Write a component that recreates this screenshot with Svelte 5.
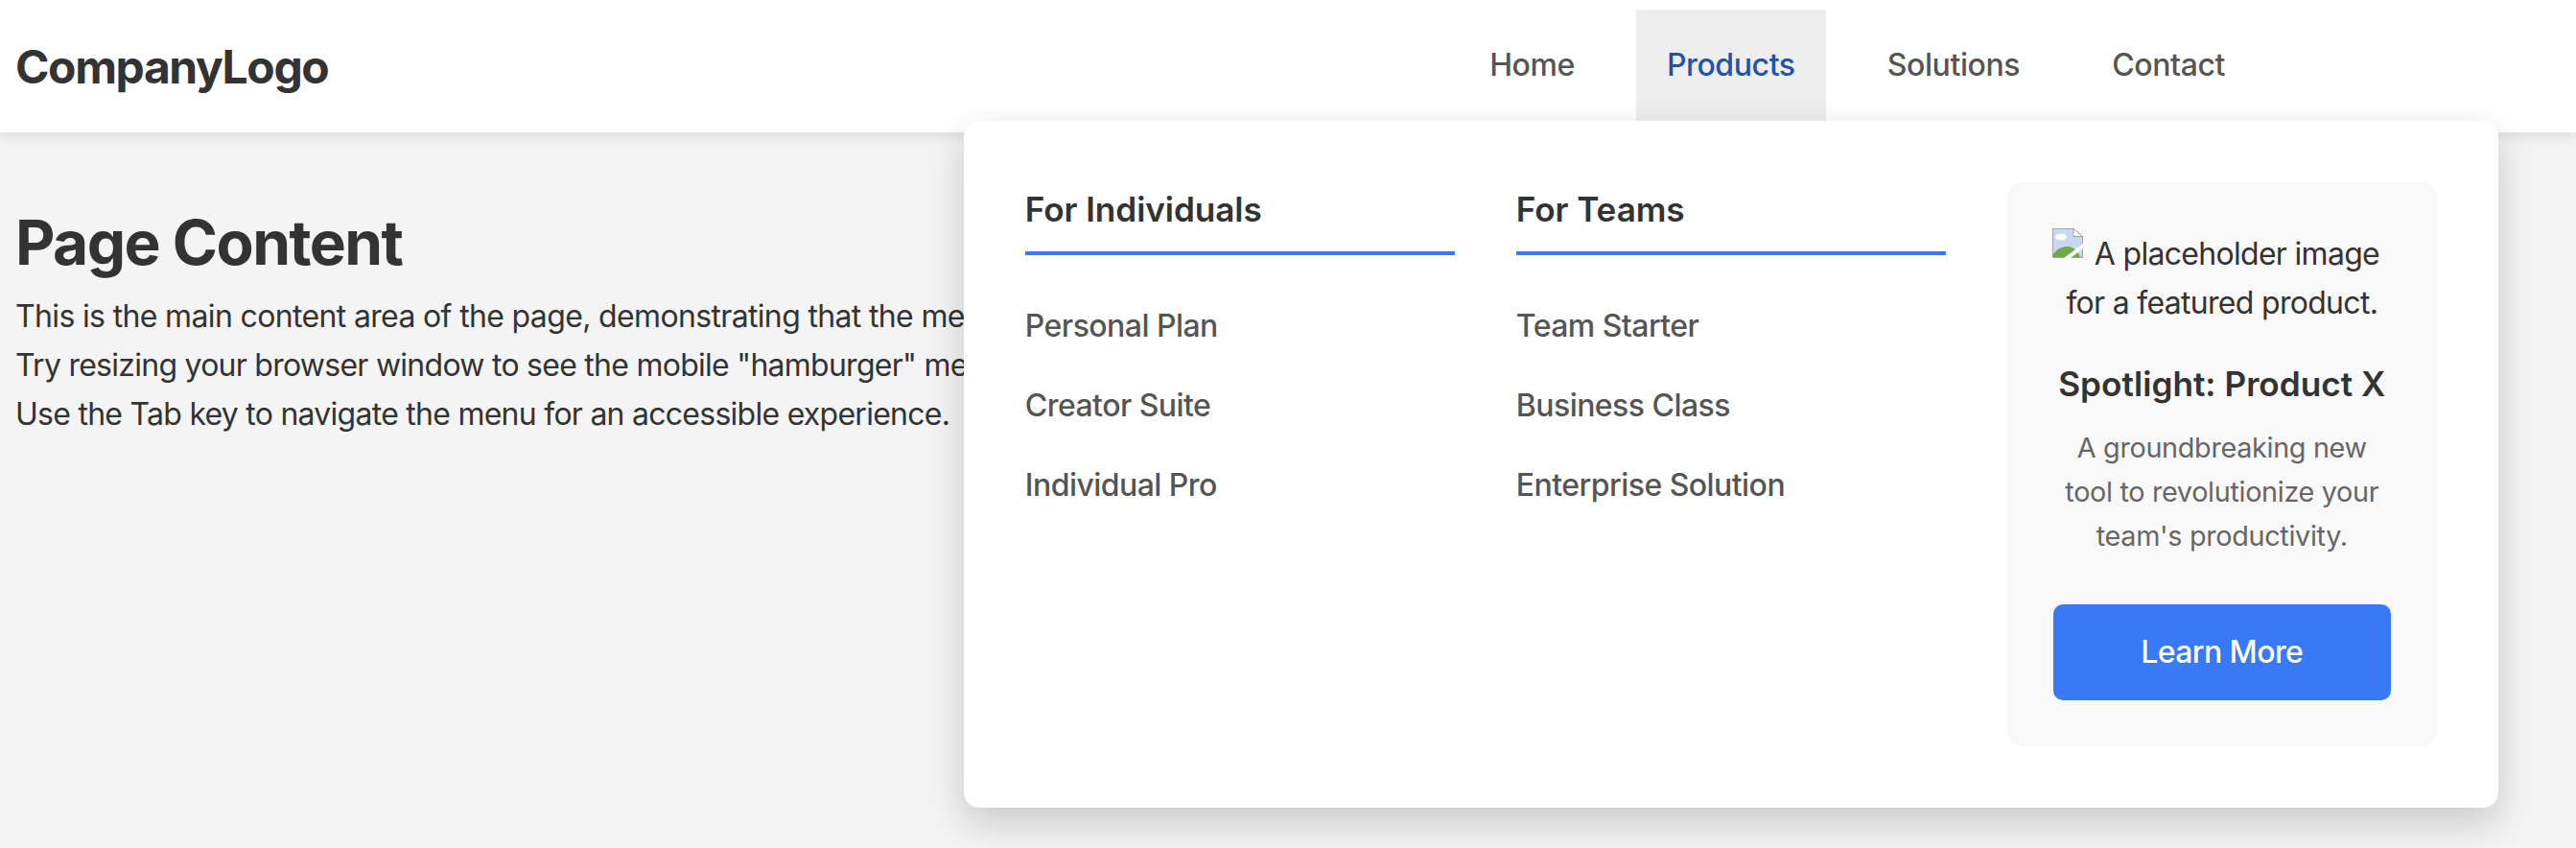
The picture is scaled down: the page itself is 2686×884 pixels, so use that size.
<script>
  const navLinks = ['Home', 'Products', 'Solutions', 'Contact'];
  const columns = [
    { title: 'For Individuals', links: ['Personal Plan', 'Creator Suite', 'Individual Pro'] },
    { title: 'For Teams', links: ['Team Starter', 'Business Class', 'Enterprise Solution'] }
  ];
</script>

<div class="page">
  <header class="header">
    <div class="logo">CompanyLogo</div>
    <nav class="nav">
      {#each navLinks as link}
        <div class="nav-item" class:active={link === 'Products'}>
          <a class="nav-link" href="#top">{link}</a>
          {#if link === 'Products'}
            <div class="mega-menu">
              {#each columns as col}
                <div class="column">
                  <h3>{col.title}</h3>
                  {#each col.links as item}
                    <a class="menu-link" href="#top">{item}</a>
                  {/each}
                </div>
              {/each}
              <div class="spotlight">
                <div class="alt-text">
                  <svg class="broken" viewBox="0 0 32 31" width="32" height="31" aria-hidden="true">
                    <path d="M0.5 0.5H22L31.5 8.5V30.5H0.5Z" fill="#c9d7f3" stroke="#a3a3a3" />
                    <path d="M22 0.5V8.5H31.5Z" fill="#fff" stroke="#a3a3a3" />
                    <ellipse cx="9" cy="9" rx="6" ry="3.5" fill="#fff" />
                    <path d="M1 30V27C5 21 11 19 16 19C22 19 26 23 29 30Z" fill="#6eaa4c" />
                    <path d="M12 31L32 16V21L19 31Z" fill="#f9f9f9" />
                  </svg>
                  A placeholder image for a featured product.
                </div>
                <h4>Spotlight: Product X</h4>
                <p>A groundbreaking new tool to revolutionize your team's productivity.</p>
                <a class="cta" href="#top">Learn More</a>
              </div>
            </div>
          {/if}
        </div>
      {/each}
    </nav>
  </header>

  <main class="content">
    <h1>Page Content</h1>
    <p>This is the main content area of the page, demonstrating that the mega menu sits on top of it.</p>
    <p>Try resizing your browser window to see the mobile "hamburger" menu in action.</p>
    <p>Use the Tab key to navigate the menu for an accessible experience.</p>
  </main>
</div>

<style>
  :global(body) {
    margin: 0;
    background: #f4f4f4;
    color: #333;
    font-family: Inter, 'Liberation Sans', sans-serif;
    font-size: 32px;
    line-height: 51.2px;
  }

  .page {
    min-height: 884px;
  }

  .header {
    height: 138px;
    box-sizing: border-box;
    padding: 0 16px;
    max-width: 2400px;
    display: flex;
    justify-content: space-between;
    align-items: center;
    position: relative;
    z-index: 2;
  }

  .header::before {
    content: '';
    position: absolute;
    top: 0;
    left: 0;
    width: 2686px;
    height: 138px;
    background: #fff;
    box-shadow: 0 4px 12px rgba(0, 0, 0, 0.1);
    z-index: -1;
  }

  .logo {
    font-size: 48px;
    font-weight: 700;
    line-height: 77px;
    letter-spacing: -1.4px;
    color: #333;
  }

  .nav {
    display: flex;
    gap: 32px;
    margin: 0 32px 2px 0;
  }

  .nav-item {
    position: relative;
  }

  .nav-link {
    display: block;
    height: 116px;
    box-sizing: border-box;
    padding: 32px;
    font-weight: 500;
    letter-spacing: -0.4px;
    color: #555;
    text-decoration: none;
  }

  .active .nav-link {
    background: #eee;
    color: #2052ae;
  }

  .mega-menu {
    position: absolute;
    top: 100%;
    left: 50%;
    transform: translateX(-50%);
    width: 1600px;
    height: 716px;
    box-sizing: border-box;
    padding: 64px;
    display: grid;
    grid-template-columns: repeat(3, 1fr);
    gap: 64px;
    background: #fff;
    border-radius: 16px;
    box-shadow: 0 16px 40px rgba(0, 0, 0, 0.18);
  }

  .column {
    display: flex;
    flex-direction: column;
  }

  .column h3 {
    margin: 0 0 32px;
    padding-bottom: 16px;
    border-bottom: 4px solid #3879f6;
    font-size: 35.2px;
    font-weight: 600;
    line-height: 56px;
    letter-spacing: -0.1px;
    color: #333;
  }

  .menu-link {
    padding: 16px 0;
    font-weight: 500;
    letter-spacing: -0.55px;
    color: #555;
    text-decoration: none;
  }

  .spotlight {
    padding: 48px;
    background: #f9f9f9;
    border-radius: 16px;
    text-align: center;
  }

  .alt-text {
    margin-bottom: -1px;
    color: #333;
    letter-spacing: -0.7px;
  }

  .broken {
    margin: 0 4px 0 -13px;
    vertical-align: 7px;
  }

  .spotlight h4 {
    margin: 32px 0 16px;
    font-size: 35.2px;
    font-weight: 600;
    line-height: 56px;
    color: #333;
  }

  .spotlight p {
    margin: 0 0 47.6px;
    font-size: 28.8px;
    line-height: 46px;
    letter-spacing: -0.33px;
    color: #666;
  }

  .cta {
    display: block;
    padding: 24.4px 32px;
    background: #3879f6;
    border-radius: 10px;
    color: #fff;
    font-weight: 500;
    letter-spacing: -0.6px;
    text-decoration: none;
  }

  .content {
    padding: 64px 16px;
  }

  .content h1 {
    margin: 0;
    font-size: 64px;
    font-weight: 700;
    line-height: 102px;
    letter-spacing: -1.57px;
    color: #333;
  }

  .content p {
    margin: 0;
    letter-spacing: -0.74px;
  }

  .content p:first-of-type {
    letter-spacing: -0.65px;
  }
</style>
